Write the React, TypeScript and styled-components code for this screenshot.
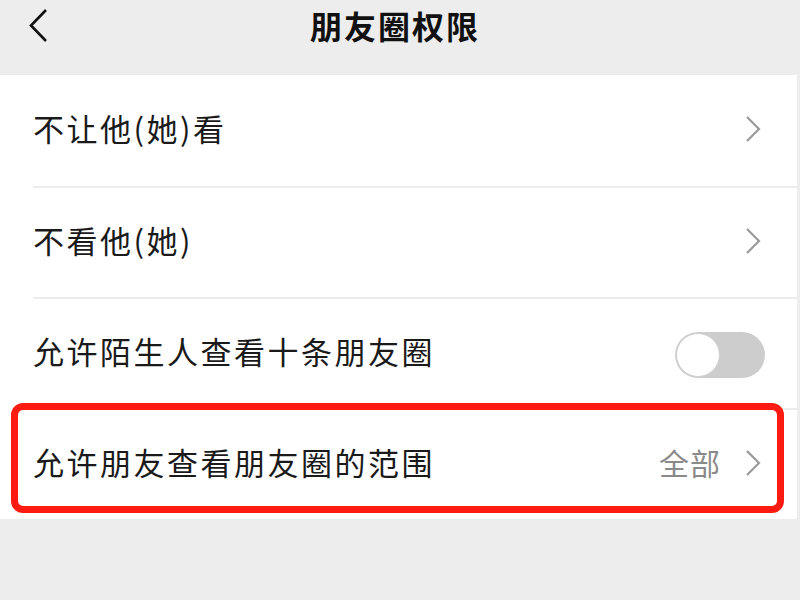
import React from "react";
import styled, { createGlobalStyle } from "styled-components";

const Global = createGlobalStyle`
  html, body { margin: 0; padding: 0; background: #ededed; }
  body { font-family: "Noto Sans CJK SC", "Noto Sans", sans-serif; }
`;

const Page = styled.div`
  width: 800px;
  height: 600px;
  background: #ededed;
  overflow: hidden;
`;

const Header = styled.header`
  height: 75px;
  display: grid;
  grid-template-columns: 1fr auto 1fr;
  align-items: center;
  padding: 0 36px 0 26px;
  box-sizing: border-box;
`;

const BackButton = styled.button`
  justify-self: start;
  width: 26px;
  height: 40px;
  padding: 0;
  margin-top: -24px;
  border: 0;
  background: none;
  display: flex;
  align-items: center;
  justify-content: center;
`;

const Title = styled.h1`
  margin: -26px 0 0 0;
  font-size: 32px;
  font-weight: 700;
  letter-spacing: 2px;
  color: #111;
`;

const List = styled.section`
  width: 797px;
  background: #fff;
`;

const Row = styled.div`
  position: relative;
  height: 111px;
  padding-left: 33px;
  box-sizing: border-box;
`;

const RowInner = styled.div<{ $first?: boolean }>`
  height: 100%;
  display: flex;
  align-items: center;
  padding-right: 36px;
  border-top: ${(p) => (p.$first ? "none" : "2px solid #ececec")};
  box-sizing: border-box;
`;

const Label = styled.span`
  flex: 1;
  font-size: 31px;
  letter-spacing: 2.5px;
  color: #1a1a1a;
  margin-top: -6px;
`;

const Value = styled.span`
  font-size: 30px;
  color: #8a8a8a;
  letter-spacing: 1px;
  margin-right: 24px;
  margin-top: -6px;
`;

const Toggle = styled.div`
  width: 90px;
  height: 46px;
  border-radius: 23px;
  background: #cdcdcd;
  margin-right: -4px;
  margin-top: 2px;
  padding: 1px;
  box-sizing: border-box;
  display: flex;
  align-items: center;
`;

const Knob = styled.div`
  width: 44px;
  height: 44px;
  border-radius: 50%;
  background: #fff;
  box-sizing: border-box;
  border: 1.5px solid #d0d0d0;
`;

const Highlight = styled.div`
  position: absolute;
  left: 11px;
  top: -5px;
  width: 773px;
  height: 110px;
  border: 7px solid #ff1a12;
  border-radius: 12px;
  box-sizing: border-box;
  pointer-events: none;
`;

const Chevron = () => (
  <svg width="16" height="28" viewBox="0 0 16 28" style={{ marginTop: -4 }}>
    <path d="M2 2 L14 14 L2 26" fill="none" stroke="#9a9a9a" strokeWidth="2.2" />
  </svg>
);

const BackIcon = () => (
  <svg width="22" height="36" viewBox="0 0 22 36">
    <path d="M18 2 L3 17.5 L18 33" fill="none" stroke="#111" strokeWidth="2.6" />
  </svg>
);

type Item = { label: string; kind: "link" | "toggle"; value?: string; highlighted?: boolean };

const items: Item[] = [
  { label: "不让他(她)看", kind: "link" },
  { label: "不看他(她)", kind: "link" },
  { label: "允许陌生人查看十条朋友圈", kind: "toggle" },
  { label: "允许朋友查看朋友圈的范围", kind: "link", value: "全部", highlighted: true },
];

export default function App() {
  return (
    <Page>
      <Global />
      <Header>
        <BackButton aria-label="返回">
          <BackIcon />
        </BackButton>
        <Title>朋友圈权限</Title>
        <span />
      </Header>
      <List>
        {items.map((it, i) => (
          <Row key={it.label}>
            <RowInner $first={i === 0}>
              <Label>{it.label}</Label>
              {it.value && <Value>{it.value}</Value>}
              {it.kind === "link" ? (
                <Chevron />
              ) : (
                <Toggle>
                  <Knob />
                </Toggle>
              )}
            </RowInner>
            {it.highlighted && <Highlight />}
          </Row>
        ))}
      </List>
    </Page>
  );
}
